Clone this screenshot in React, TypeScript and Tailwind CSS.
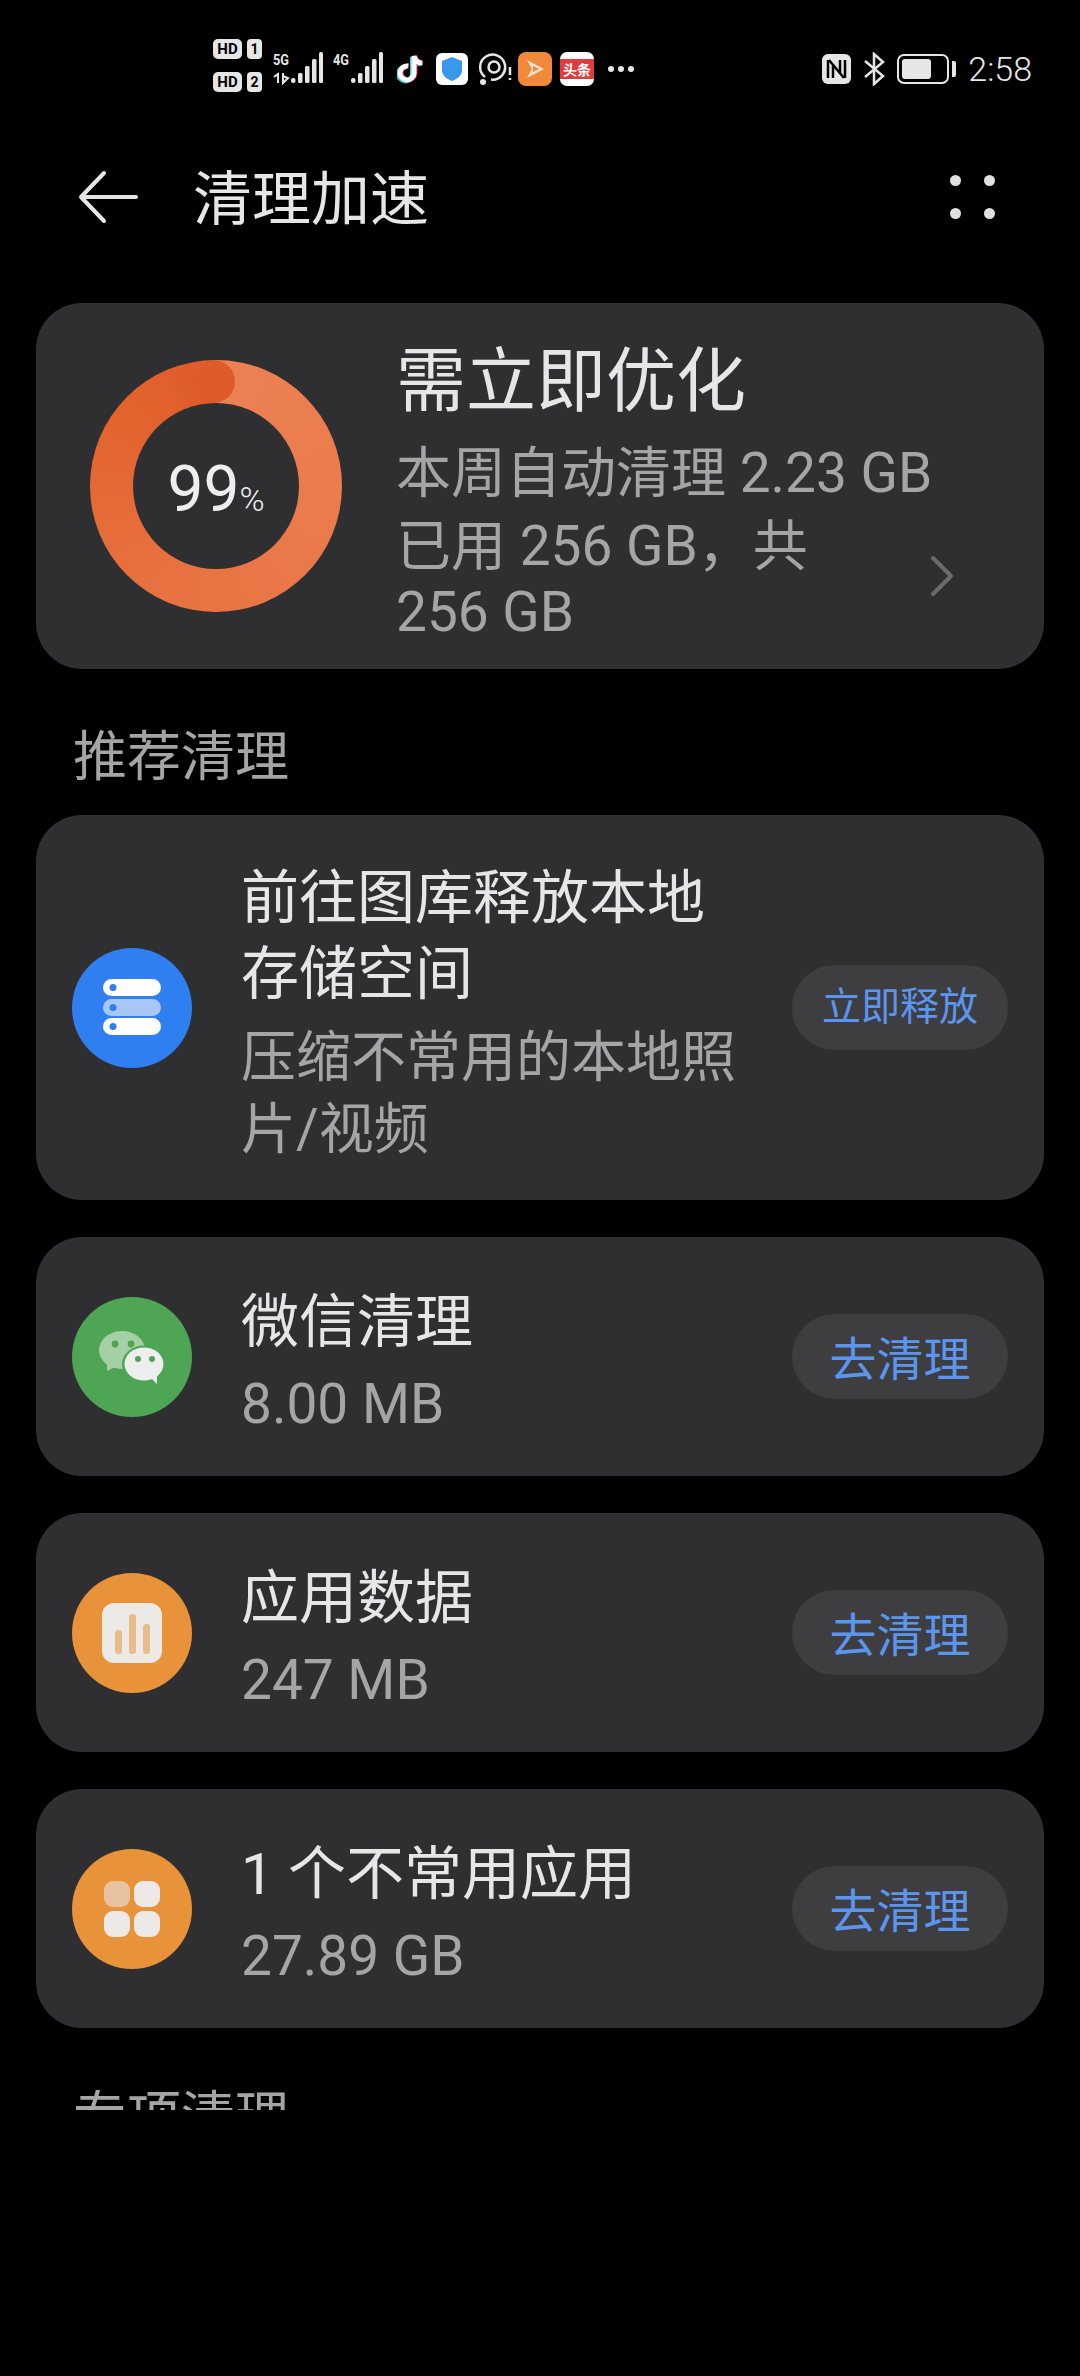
import type { ReactNode } from "react";

const sans = "font-['Roboto','Noto_Sans_CJK_SC',sans-serif]";

function SignalBars({ tag, five }: { tag: string; five?: boolean }) {
  return (
    <svg width="50" height="34" viewBox="0 0 50 34" fill="#e6e6e6">
      <text x="0" y="14" fontSize="15" fontWeight="700" fontFamily="'Roboto',sans-serif" textLength="16" lengthAdjust="spacingAndGlyphs">{tag}</text>
      {five && <path d="M1 26l4-3v9M10 22v10l5-5-5-2" fill="none" stroke="#e6e6e6" strokeWidth="2" />}
      <rect x="18" y="27" width="4.5" height="5" rx="2" />
      <rect x="25" y="22" width="4.5" height="10" rx="1.5" />
      <rect x="32" y="15" width="4.5" height="17" rx="1.5" />
      <rect x="39" y="8" width="4.5" height="24" rx="1.5" />
      <rect x="46" y="1" width="4" height="31" rx="1.5" />
    </svg>
  );
}

function StatusBar() {
  return (
    <div className={`flex items-center h-[130px] pl-[213px] pr-[48px] ${sans}`}>
      <div className="flex flex-col gap-[13px] w-[50px] text-[#e6e6e6]">
        {["1", "2"].map((n) => (
          <div key={n} className="flex gap-[5px]">
            <div className="w-[29px] h-[20px] rounded-[5px] bg-[#e6e6e6] text-black text-[15px] leading-[20px] font-bold text-center">HD</div>
            <div className="w-[15px] h-[20px] rounded-[4px] bg-[#e6e6e6] text-black text-[14px] leading-[20px] font-bold text-center">{n}</div>
          </div>
        ))}
      </div>
      <div className="ml-[10px] mt-[5px]"><SignalBars tag="5G" five /></div>
      <div className="ml-[10px] mt-[5px]"><SignalBars tag="4G" /></div>
      <svg className="ml-[14px] mt-[8px]" width="26" height="30" viewBox="0 0 26 30" fill="none" strokeWidth="5">
        <path d="M11 12a7 7 0 1 0 6 7V2c1 4 3 7 8 7" stroke="#25d5df" transform="translate(-1.5 1)" />
        <path d="M11 12a7 7 0 1 0 6 7V2c1 4 3 7 8 7" stroke="#f0305a" transform="translate(1 0)" />
        <path d="M11 12a7 7 0 1 0 6 7V2c1 4 3 7 8 7" stroke="#ffffff" />
      </svg>
      <div className="ml-[13px] mt-[8px] w-[32px] h-[32px] rounded-[6px] bg-white flex items-center justify-center">
        <svg width="24" height="26" viewBox="0 0 24 26"><path d="M12 1l10 4v9c0 6-5 9-10 11C7 23 2 20 2 14V5z" fill="#3a98ec" /></svg>
      </div>
      <svg className="ml-[11px] mt-[8px]" width="34" height="34" viewBox="0 0 34 34" fill="none" stroke="#e6e6e6">
        <path d="M6 25a12.5 12.5 0 1 1 6 2.5" strokeWidth="2.5" />
        <circle cx="15" cy="15" r="5.5" strokeWidth="2.5" />
        <circle cx="4" cy="30" r="3" fill="#e6e6e6" stroke="none" />
        <path d="M31 15v8M31 26v2" strokeWidth="2.5" />
      </svg>
      <div className="ml-[5px] mt-[7px] w-[34px] h-[34px] rounded-[8px] bg-[#f08a3a] flex items-center justify-center">
        <svg width="20" height="22" viewBox="0 0 20 22">
          <path d="M2 2l17 9-17 9 5-9z" fill="#fbe3cf" />
          <path d="M8 8l6 3-6 3z" fill="#f08a3a" />
        </svg>
      </div>
      <div className="ml-[8px] mt-[7px] w-[34px] h-[34px] rounded-[7px] bg-white flex items-center overflow-hidden">
        <div className="w-full h-[20px] bg-[#e03c3f] text-white text-[14px] leading-[20px] text-center font-bold font-['Noto_Sans_CJK_SC',sans-serif]">头条</div>
      </div>
      <div className="ml-[14px] mt-[7px] flex gap-[4px]">
        <div className="w-[6px] h-[6px] rounded-full bg-[#e6e6e6]" />
        <div className="w-[6px] h-[6px] rounded-full bg-[#e6e6e6]" />
        <div className="w-[6px] h-[6px] rounded-full bg-[#e6e6e6]" />
      </div>
      <div className="ml-auto mt-[7px] flex items-center">
        <div className="w-[29px] h-[30px] rounded-[6px] bg-[#e6e6e6] flex items-center justify-center">
          <svg width="21" height="24" viewBox="0 0 21 24" fill="none" stroke="#000" strokeWidth="2.5"><path d="M2 3v18M19 3v18M3 3l15 18M7 8v13M14 3v13" /></svg>
        </div>
        <svg className="ml-[12px]" width="22" height="34" viewBox="0 0 22 34" fill="none" stroke="#e6e6e6" strokeWidth="2.5"><path d="M2 9l18 15-9 8V2l9 8L2 25" /></svg>
        <div className="ml-[12px] w-[52px] h-[30px] rounded-[7px] border-[2px] border-[#e6e6e6] p-[3px]">
          <div className="w-[29px] h-full rounded-[3px] bg-[#e6e6e6]" />
        </div>
        <div className="ml-[3px] w-[4px] h-[16px] rounded-r-[2px] bg-[#e6e6e6]" />
        <div className="ml-[12px] text-[34px] leading-none text-[#e6e6e6] font-light">2:58</div>
      </div>
    </div>
  );
}

function Header() {
  return (
    <div className="flex items-center h-[100px] mt-[17px] pl-[78px] pr-[85px]">
      <svg width="60" height="54" viewBox="0 0 60 54" fill="none" stroke="#e6e6e6" strokeWidth="4" strokeLinecap="round" strokeLinejoin="round">
        <path d="M58 27H3M26 3L3 27l23 24" />
      </svg>
      <div className="ml-[55px] pt-[5px] text-[59px] leading-none text-[#e6e6e6]">清理加速</div>
      <div className="ml-auto grid grid-cols-2 gap-x-[23px] gap-y-[22px]">
        {[1, 2, 3, 4].map((i) => (
          <div key={i} className="w-[11px] h-[11px] rounded-full bg-[#e0e0e0]" />
        ))}
      </div>
    </div>
  );
}

function UsageRing() {
  return (
    <div className="relative w-[252px] h-[252px] rounded-full bg-[conic-gradient(#ec8153_0deg,#ea7a4a_120deg,#e7703f_220deg,#e3642f_300deg,#e05c2a_360deg)] flex items-center justify-center shrink-0">
      <div className="absolute top-0 left-[102px] w-[43px] h-[43px] rounded-full bg-[#df5c2a]" />
      <div className="w-[166px] h-[166px] rounded-full bg-[#2f2f31] flex items-baseline justify-center pt-[52px] text-[#eeeeee]">
        <span className="text-[64px] leading-[70px] font-normal">99</span>
        <span className="text-[34px] leading-none font-light">%</span>
      </div>
    </div>
  );
}

function SummaryCard() {
  return (
    <div className="flex items-center mt-[56px] mx-[36px] h-[366px] rounded-[46px] bg-[#2f2f31] pl-[54px] pr-[90px]">
      <UsageRing />
      <div className="ml-[54px] mt-[12px] w-[530px] shrink-0">
        <div className="relative top-[3px] text-[70px] leading-[80px] text-[#e6e6e6]">需立即优化</div>
        <div className="mt-[21px] text-[55px] leading-[66px] text-[#a5a5a5] whitespace-nowrap">本周自动清理 2.23 GB</div>
        <div className="mt-[7px] w-[440px] text-[55px] leading-[66px] text-[#a5a5a5]">已用 256 GB，共 256 GB</div>
      </div>
      <svg className="ml-auto mt-[180px] shrink-0" width="24" height="42" viewBox="0 0 24 42" fill="none" stroke="#6a6a6c" strokeWidth="4" strokeLinecap="round" strokeLinejoin="round">
        <path d="M3 3l18 18L3 39" />
      </svg>
    </div>
  );
}

function RowCard({ icon, title, sub, action, actionClass, tall }: { icon: ReactNode; title: ReactNode; sub: ReactNode; action: string; actionClass: string; tall?: boolean }) {
  return (
    <div className={`flex items-center mx-[36px] rounded-[46px] bg-[#2f2f31] pl-[36px] pr-[36px] ${tall ? "h-[385px]" : "h-[239px]"}`}>
      {icon}
      <div className="ml-[49px] mt-[9px] w-[520px] shrink-0">
        <div className="text-[58px] leading-[76px] text-[#e6e6e6]">{title}</div>
        <div className={`mt-[9px] text-[55px] text-[#a5a5a5] ${tall ? "leading-[72px]" : "leading-[70px]"}`}>{sub}</div>
      </div>
      <div className={`ml-auto w-[216px] h-[85px] rounded-full bg-[#3e3e40] flex items-center justify-center text-[#5b95ee] ${actionClass}`}>{action}</div>
    </div>
  );
}

const Circle = ({ color, children }: { color: string; children: ReactNode }) => (
  <div className={`w-[120px] h-[120px] rounded-full shrink-0 flex items-center justify-center ${color}`}>{children}</div>
);

const StorageIcon = (
  <Circle color="bg-[#2f7ff0]">
    <svg width="58" height="58" viewBox="0 0 58 58">
      <rect y="0" width="58" height="17" rx="8.5" fill="#fff" />
      <rect y="20" width="58" height="17" rx="8.5" fill="#a9c7f5" />
      <rect y="39" width="58" height="17" rx="8.5" fill="#fff" />
      <circle cx="10" cy="8.5" r="3.5" fill="#2f7ff0" />
      <circle cx="10" cy="28.5" r="3.5" fill="#2f7ff0" />
      <circle cx="10" cy="47.5" r="3.5" fill="#2f7ff0" />
    </svg>
  </Circle>
);

const WechatIcon = (
  <Circle color="bg-[#4ea554]">
    <svg width="66" height="54" viewBox="0 0 66 54">
      <ellipse cx="23" cy="20" rx="23" ry="19" fill="#a5d0a6" />
      <path d="M8 32l0 9 10-5z" fill="#a5d0a6" />
      <circle cx="16" cy="14" r="3.4" fill="#4ea554" />
      <circle cx="32" cy="14" r="3.4" fill="#4ea554" />
      <ellipse cx="45" cy="34" rx="22" ry="18.5" fill="#4ea554" />
      <ellipse cx="45" cy="34" rx="19.5" ry="16.5" fill="#eeeeee" />
      <path d="M52 48l6 6 0-10z" fill="#eeeeee" />
      <circle cx="39" cy="29" r="3" fill="#4ea554" />
      <circle cx="53" cy="29" r="3" fill="#4ea554" />
    </svg>
  </Circle>
);

const DataIcon = (
  <Circle color="bg-[#e8923a]">
    <div className="w-[60px] h-[60px] rounded-[12px] bg-[#ece9e6] flex items-end justify-center gap-[7px] pb-[9px]">
      <div className="w-[7px] h-[24px] rounded-[3px] bg-[#e8bd8c]" />
      <div className="w-[7px] h-[40px] rounded-[3px] bg-[#e8bd8c]" />
      <div className="w-[7px] h-[30px] rounded-[3px] bg-[#e8bd8c]" />
    </div>
  </Circle>
);

const AppsIcon = (
  <Circle color="bg-[#e8923a]">
    <div className="grid grid-cols-2 gap-[4px]">
      <div className="w-[26px] h-[26px] rounded-[9px] bg-[#e9c3a0]" />
      <div className="w-[26px] h-[26px] rounded-[9px] bg-[#ece9e6]" />
      <div className="w-[26px] h-[26px] rounded-[9px] bg-[#ece9e6]" />
      <div className="w-[26px] h-[26px] rounded-[9px] bg-[#ece9e6]" />
    </div>
  </Circle>
);

export default function App() {
  return (
    <div className={`w-[1080px] h-[2376px] bg-black overflow-hidden ${sans}`}>
      <StatusBar />
      <Header />
      <SummaryCard />
      <div className="mt-[57px] ml-[73px] text-[54px] leading-[64px] text-[#a5a5a5]">推荐清理</div>
      <div className="mt-[25px] flex flex-col gap-[37px]">
        <RowCard
          tall
          icon={StorageIcon}
          title={<>前往图库释放本地<br />存储空间</>}
          sub={<>压缩不常用的本地照<br />片/视频</>}
          action="立即释放"
          actionClass="text-[39px]"
        />
        <RowCard icon={WechatIcon} title="微信清理" sub="8.00 MB" action="去清理" actionClass="text-[47px] pt-[7px]" />
        <RowCard icon={DataIcon} title="应用数据" sub="247 MB" action="去清理" actionClass="text-[47px] pt-[7px]" />
        <RowCard icon={AppsIcon} title="1 个不常用应用" sub="27.89 GB" action="去清理" actionClass="text-[47px] pt-[7px]" />
      </div>
      <div className="mt-[58px] ml-[73px] h-[24px] overflow-hidden text-[54px] leading-[64px] text-[#a5a5a5]">专项清理</div>
    </div>
  );
}
